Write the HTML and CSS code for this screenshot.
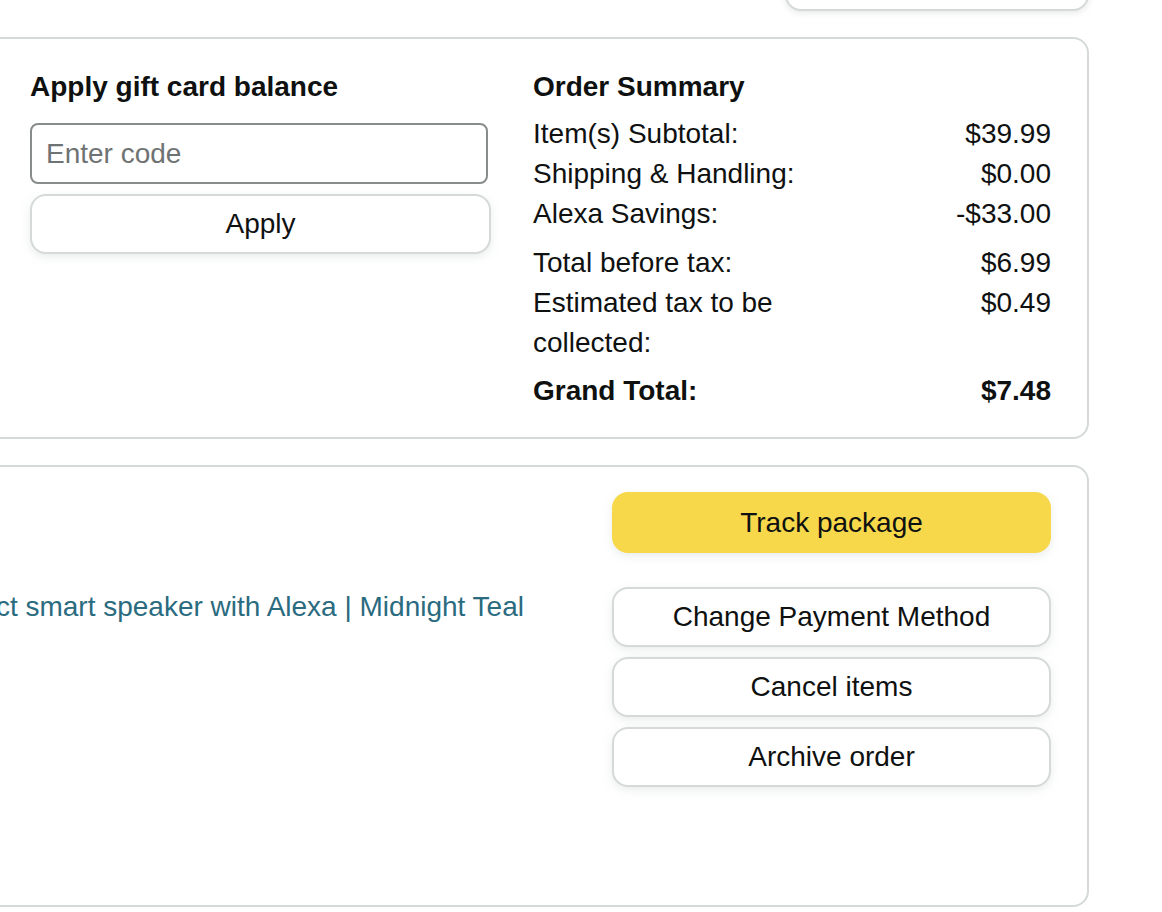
FILE: index.html
```html
<!DOCTYPE html>
<html lang="en">
<head>
  <meta charset="UTF-8">
  <title>Order Details</title>
  <link rel="stylesheet" href="styles.css">
</head>
<body>

  <div class="page">
    <div class="top-row">
      <div class="box box-small"></div>
    </div>

    <!-- Gift card + order summary -->
    <div class="box box-summary">
      <div class="gift">
        <h3>Apply gift card balance</h3>
        <input type="text" class="code-input" placeholder="Enter code">
        <button class="btn">Apply</button>
      </div>

      <div class="summary">
        <h3>Order Summary</h3>
        <div class="row"><span>Item(s) Subtotal:</span><span>$39.99</span></div>
        <div class="row"><span>Shipping &amp; Handling:</span><span>$0.00</span></div>
        <div class="row"><span>Alexa Savings:</span><span>-$33.00</span></div>
        <div class="row spaced"><span>Total before tax:</span><span>$6.99</span></div>
        <div class="row"><span>Estimated tax to be collected:</span><span>$0.49</span></div>
        <div class="row spaced grand"><span>Grand Total:</span><span>$7.48</span></div>
      </div>
    </div>

    <!-- Shipment -->
    <div class="box box-shipment">
      <div class="item">
        <a href="#" class="item-link">Echo Pop | Full sound compact smart speaker with Alexa | Midnight Teal</a>
      </div>
      <div class="actions">
        <button class="btn btn-primary">Track package</button>
        <button class="btn">Change Payment Method</button>
        <button class="btn">Cancel items</button>
        <button class="btn">Archive order</button>
      </div>
    </div>
  </div>

</body>
</html>
```

FILE: styles.css
```css
* {
  margin: 0;
  padding: 0;
  box-sizing: border-box;
}

body {
  font-family: 'Liberation Sans', Arial, sans-serif;
  font-size: 28px;
  line-height: 40px;
  color: #0f1111;
  background: #fff;
  overflow: hidden;
}

.page {
  margin-left: -40px;
  margin-right: 73px;
}

.box {
  background: #fff;
  border: 2px solid #d5d9d9;
  border-radius: 16px;
}

.top-row {
  display: flex;
  justify-content: flex-end;
}

.box-small {
  width: 304px;
  height: 51px;
  margin-top: -40px;
  box-shadow: 0 2px 6px rgba(213, 217, 217, 0.6);
}

/* gift card + summary card */
.box-summary {
  margin-top: 26px;
  height: 402px;
  padding: 28px 36px 0 68px;
  display: flex;
  gap: 42px;
}

h3 {
  font-size: 28px;
  line-height: 40px;
  font-weight: bold;
}

.gift {
  width: 461px;
  display: flex;
  flex-direction: column;
  align-items: flex-start;
}

.code-input {
  margin-top: 16px;
  width: 458px;
  height: 61px;
  border: 2px solid #888c8c;
  border-radius: 8px;
  padding: 0 14px;
  font-family: inherit;
  font-size: 28px;
  color: #0f1111;
  outline: none;
}

.code-input::placeholder {
  color: #6f7373;
}

.btn {
  width: 100%;
  height: 60px;
  background: #fff;
  border: 2px solid #d5d9d9;
  border-radius: 16px;
  box-shadow: 0 3px 8px rgba(213, 217, 217, 0.5);
  font-family: inherit;
  font-size: 28px;
  color: #0f1111;
  cursor: pointer;
}

.gift .btn {
  margin-top: 10px;
}

.summary {
  flex: 1;
}

.summary h3 {
  margin-bottom: 7px;
}

.row {
  display: flex;
  justify-content: space-between;
}

.row span:first-child {
  width: 300px;
}

.row span:last-child {
  text-align: right;
}

.row.spaced {
  margin-top: 9px;
}

.row.grand {
  margin-top: 8px;
  font-weight: bold;
}

/* shipment card */
.box-shipment {
  margin-top: 26px;
  height: 442px;
  padding: 25px 36px 0 0;
  display: flex;
  gap: 88px;
}

.item {
  flex: 1;
  min-width: 0;
  display: flex;
  justify-content: flex-end;
  padding-top: 95px;
  overflow: hidden;
}

.item-link {
  white-space: nowrap;
  color: #2b6b80;
  text-decoration: none;
  height: 40px;
}

.actions {
  width: 439px;
  display: flex;
  flex-direction: column;
  gap: 10px;
}

.btn-primary {
  height: 61px;
  margin-bottom: 24px;
  background: #f7d84b;
  border-color: #f7d84b;
  box-shadow: 0 3px 8px rgba(213, 217, 217, 0.5);
}
```
